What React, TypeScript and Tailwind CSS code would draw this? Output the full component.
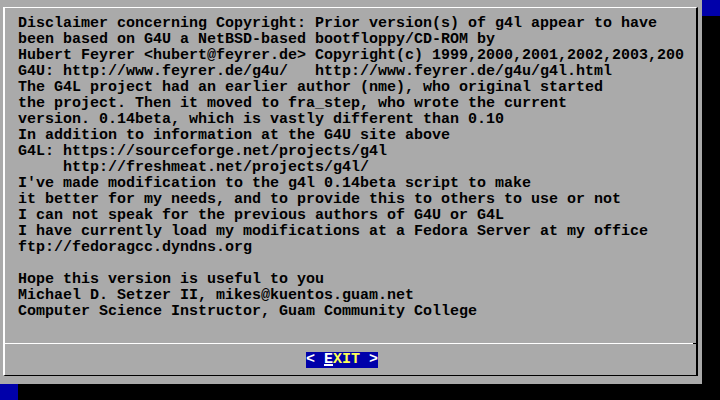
import React from "react";

const lines = [
  "Disclaimer concerning Copyright: Prior version(s) of g4l appear to have",
  "been based on G4U a NetBSD-based bootfloppy/CD-ROM by",
  "Hubert Feyrer <hubert@feyrer.de> Copyright(c) 1999,2000,2001,2002,2003,200",
  "G4U: http://www.feyrer.de/g4u/   http://www.feyrer.de/g4u/g4l.html",
  "The G4L project had an earlier author (nme), who original started",
  "the project. Then it moved to fra_step, who wrote the current",
  "version. 0.14beta, which is vastly different than 0.10",
  "In addition to information at the G4U site above",
  "G4L: https://sourceforge.net/projects/g4l",
  "     http://freshmeat.net/projects/g4l/",
  "I've made modification to the g4l 0.14beta script to make",
  "it better for my needs, and to provide this to others to use or not",
  "I can not speak for the previous authors of G4U or G4L",
  "I have currently load my modifications at a Fedora Server at my office",
  "ftp://fedoragcc.dyndns.org",
  "",
  "Hope this version is useful to you",
  "Michael D. Setzer II, mikes@kuentos.guam.net",
  "Computer Science Instructor, Guam Community College",
];

export default function App() {
  return (
    <div
      className="w-[720px] h-[400px] bg-[#0000aa] overflow-hidden text-[15px] leading-[16px] font-bold"
      style={{ fontFamily: '"Liberation Mono", "DejaVu Sans Mono", monospace' }}
    >
      <div className="w-[702px] h-[384px] bg-[#aaaaaa] shadow-[18px_16px_0_0_#000] pt-[7px] pl-[3px] pr-[4px] pb-[8px] flex">
        <div className="flex-1 flex flex-col border-l-2 border-t border-r-2 border-b border-l-white border-t-white border-r-black border-b-black">
          <div className="pt-[8px] pl-[13px] text-black whitespace-pre">
            {lines.map((l, i) => (
              <div key={i} className="h-[16px]">
                {l}
              </div>
            ))}
          </div>
          <div className="mt-[23px] h-px flex">
            <div className="flex-1 bg-white" />
            <div className="w-[3px] bg-black" />
          </div>
          <div className="mt-[8px] ml-[301px] flex">
            <div className="h-[16px] bg-[#0000aa] whitespace-pre flex items-start">
              <span className="text-white">{"< "}</span>
              <span className="text-white inline-block w-[9px] h-[14px] border-b-2 border-white">E</span>
              <span className="text-[#ffff55]">XIT</span>
              <span className="text-white">{" >"}</span>
            </div>
          </div>
        </div>
      </div>
    </div>
  );
}
